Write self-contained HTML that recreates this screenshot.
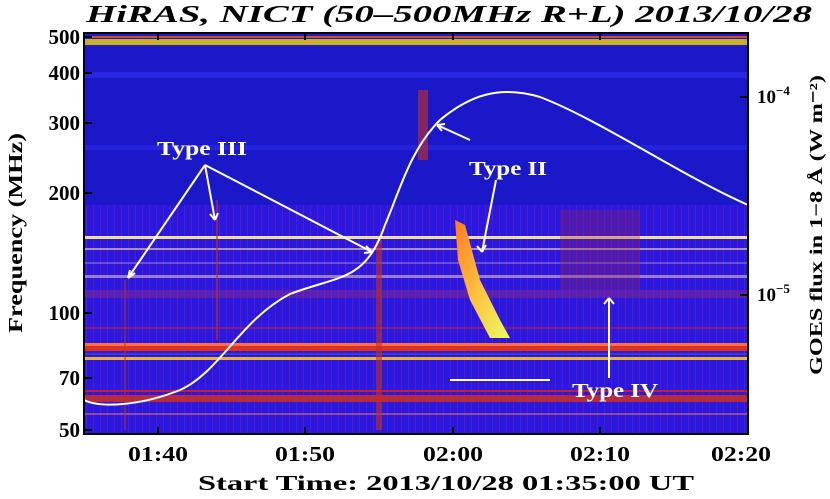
<!DOCTYPE html>
<html><head><meta charset="utf-8"><style>
body{margin:0;background:#fff;width:830px;height:499px;overflow:hidden}
svg{display:block}
text{font-family:"Liberation Serif",serif;font-weight:bold}
</style></head><body>
<svg width="830" height="499" viewBox="0 0 830 499">
<defs>
<linearGradient id="hot" x1="0" y1="0" x2="1" y2="1">
<stop offset="0" stop-color="#ff7a20"/><stop offset="0.5" stop-color="#ffc040"/><stop offset="1" stop-color="#e8ff60"/>
</linearGradient>
<pattern id="vs" width="7" height="10" patternUnits="userSpaceOnUse">
<rect x="2" width="1" height="10" fill="#8020a0" opacity=".5"/>
</pattern>
</defs>
<text x="86" y="22" font-size="24" font-style="italic" textLength="726" lengthAdjust="spacingAndGlyphs">HiRAS, NICT (50–500MHz R+L)  2013/10/28</text>
<rect x="84" y="33" width="664" height="401" fill="#1e1ad8"/>
<rect x="84" y="46" width="664" height="160" fill="#1a18c8"/>
<rect x="84" y="36" width="664" height="2" fill="#d05020"/>
<rect x="84" y="39" width="664" height="6" fill="#c8b020"/>
<rect x="84" y="72" width="664" height="6" fill="#2a2ae8" opacity=".8"/>
<rect x="84" y="145" width="664" height="5" fill="#2a2ae8" opacity=".7"/>
<rect x="84" y="205" width="664" height="229" fill="#2a18e0"/>
<rect x="84" y="205" width="664" height="229" fill="url(#vs)"/>
<rect x="84" y="236" width="664" height="3" fill="#f0e090"/>
<rect x="84" y="248" width="664" height="2" fill="#e8c0a0" opacity=".7"/>
<rect x="84" y="262" width="664" height="2" fill="#c0a0d0" opacity=".4"/>
<rect x="84" y="275" width="664" height="3" fill="#e0c0d0" opacity=".6"/>
<rect x="84" y="290" width="664" height="8" fill="#a03070" opacity=".4"/>
<rect x="84" y="327" width="664" height="2" fill="#c02040" opacity=".6"/>
<rect x="84" y="343" width="664" height="3" fill="#ff7040"/>
<rect x="84" y="346" width="664" height="5" fill="#e03020"/>
<rect x="84" y="353" width="664" height="2" fill="#3040d0"/>
<rect x="84" y="357" width="664" height="3" fill="#f0b040"/>
<rect x="84" y="390" width="664" height="2" fill="#c02030"/>
<rect x="84" y="395" width="664" height="7" fill="#d03020" opacity=".85"/>
<rect x="84" y="413" width="664" height="2" fill="#c06080" opacity=".7"/>
<rect x="376" y="240" width="6" height="190" fill="#c03020" opacity=".6"/>
<rect x="216" y="200" width="2" height="140" fill="#c03020" opacity=".6"/>
<rect x="124" y="280" width="2" height="150" fill="#c03020" opacity=".5"/>
<rect x="418" y="90" width="10" height="70" fill="#c83020" opacity=".6"/>
<path d="M455 220 L465 225 L480 280 L500 320 L510 338 L490 338 L470 300 L458 260 Z" fill="url(#hot)"/>
<rect x="560" y="210" width="80" height="80" fill="#a02050" opacity=".3"/>
<rect x="450" y="379" width="100" height="2" fill="#fff"/>
<path d="M84 400 C100 408 140 406 180 390 C220 372 240 320 290 294 C340 275 365 282 385 225 C400 190 410 150 440 120 C470 95 500 85 540 97 C600 120 680 175 748 205" fill="none" stroke="#fff" stroke-width="2"/>
<g stroke="#fff" stroke-width="2" fill="none">
<path d="M205 165 L128 278 M205 165 L215 220 M205 165 L372 252 M470 140 L437 125 M496 180 L482 252 M609 378 L609 298"/>
<path d="M128 278 l2 -8 M128 278 l7 -5 M215 220 l-5 -6 M215 220 l3 -7 M372 252 l-6 -6 M372 252 l-8 1 M437 125 l8 -1 M437 125 l5 6 M482 252 l-5 -6 M482 252 l4 -7 M609 298 l-5 6 M609 298 l5 6"/>
</g>
<g fill="#fff" font-size="20">
<text x="157" y="155" textLength="90" lengthAdjust="spacingAndGlyphs">Type III</text>
<text x="469" y="175" textLength="78" lengthAdjust="spacingAndGlyphs">Type II</text>
<text x="572" y="397" textLength="86" lengthAdjust="spacingAndGlyphs">Type IV</text>
</g>
<rect x="84" y="33" width="664" height="401" fill="none" stroke="#000" stroke-width="2"/>
<g stroke="#000" stroke-width="2">
<path d="M158 434v-7M305 434v-7M453 434v-7M600 434v-7M158 33v7M305 33v7M453 33v7M600 33v7"/>
<path d="M84 37h8M84 73h8M84 123h8M84 193h8M84 313h8M84 378h8M84 430h8"/>
<path d="M748 97h-8M748 295h-8"/>
</g>
<g font-size="21" text-anchor="end">
<text x="80" y="44">500</text><text x="80" y="80">400</text><text x="80" y="130">300</text><text x="80" y="200">200</text><text x="80" y="320">100</text><text x="80" y="385">70</text><text x="80" y="437">50</text>
</g>
<g font-size="21" text-anchor="middle">
<text x="158" y="461" textLength="60" lengthAdjust="spacingAndGlyphs">01:40</text><text x="305" y="461" textLength="60" lengthAdjust="spacingAndGlyphs">01:50</text><text x="453" y="461" textLength="60" lengthAdjust="spacingAndGlyphs">02:00</text><text x="600" y="461" textLength="60" lengthAdjust="spacingAndGlyphs">02:10</text><text x="741" y="461" textLength="60" lengthAdjust="spacingAndGlyphs">02:20</text>
</g>
<text x="198" y="490" font-size="21" textLength="496" lengthAdjust="spacingAndGlyphs">Start Time: 2013/10/28 01:35:00 UT</text>
<text transform="translate(22,233) rotate(-90)" text-anchor="middle" font-size="20" textLength="200" lengthAdjust="spacingAndGlyphs">Frequency (MHz)</text>
<text x="757" y="103" font-size="19">10<tspan dy="-8" font-size="13">−4</tspan></text>
<text x="757" y="301" font-size="19">10<tspan dy="-8" font-size="13">−5</tspan></text>
<text transform="translate(822,225) rotate(-90)" text-anchor="middle" font-size="18" textLength="300" lengthAdjust="spacingAndGlyphs">GOES flux in 1−8 Å (W m⁻²)</text>
</svg>
</body></html>
